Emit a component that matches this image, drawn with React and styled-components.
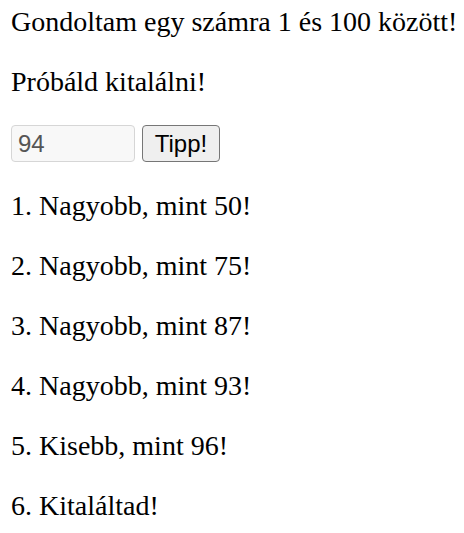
import React, { useState } from 'react';
import styled, { createGlobalStyle } from 'styled-components';

const GlobalStyle = createGlobalStyle`
  html, body {
    margin: 0;
    padding: 0;
    background: #fff;
  }
  body {
    font-family: "Liberation Serif", "Times New Roman", serif;
    color: #000;
  }
`;

const Page = styled.div`
  display: flex;
  flex-direction: column;
  gap: 28px;
  padding: 6px 11px 0 11px;
  font-size: 28px;
  line-height: 32px;
`;

const Line = styled.div`
  white-space: nowrap;
`;

const GuessRow = styled.form`
  display: flex;
  align-items: center;
  gap: 7px;
  margin: -1px 0 0 0;
`;

const NumberInput = styled.input`
  box-sizing: border-box;
  width: 124px;
  height: 37px;
  padding: 0 6px;
  border: 1px solid #d6d6d6;
  border-radius: 4px;
  background: #f8f8f8;
  color: #555;
  font-family: "Liberation Sans", Arial, sans-serif;
  font-size: 24px;
  outline: none;
`;

const TipButton = styled.button`
  box-sizing: border-box;
  width: 78px;
  height: 37px;
  padding: 0;
  border: 1px solid #767676;
  border-radius: 4px;
  background: #efefef;
  color: #000;
  font-family: "Liberation Sans", Arial, sans-serif;
  font-size: 24px;
`;

const guesses = [
  'Nagyobb, mint 50!',
  'Nagyobb, mint 75!',
  'Nagyobb, mint 87!',
  'Nagyobb, mint 93!',
  'Kisebb, mint 96!',
  'Kitaláltad!',
];

export default function App() {
  const [value, setValue] = useState('94');

  return (
    <>
      <GlobalStyle />
      <Page>
        <Line>Gondoltam egy számra 1 és 100 között!</Line>
        <Line>Próbáld kitalálni!</Line>
        <GuessRow onSubmit={(e) => e.preventDefault()}>
          <NumberInput value={value} onChange={(e) => setValue(e.target.value)} />
          <TipButton type="submit">Tipp!</TipButton>
        </GuessRow>
        {guesses.map((g, i) => (
          <Line key={i}>{i + 1}. {g}</Line>
        ))}
      </Page>
    </>
  );
}
